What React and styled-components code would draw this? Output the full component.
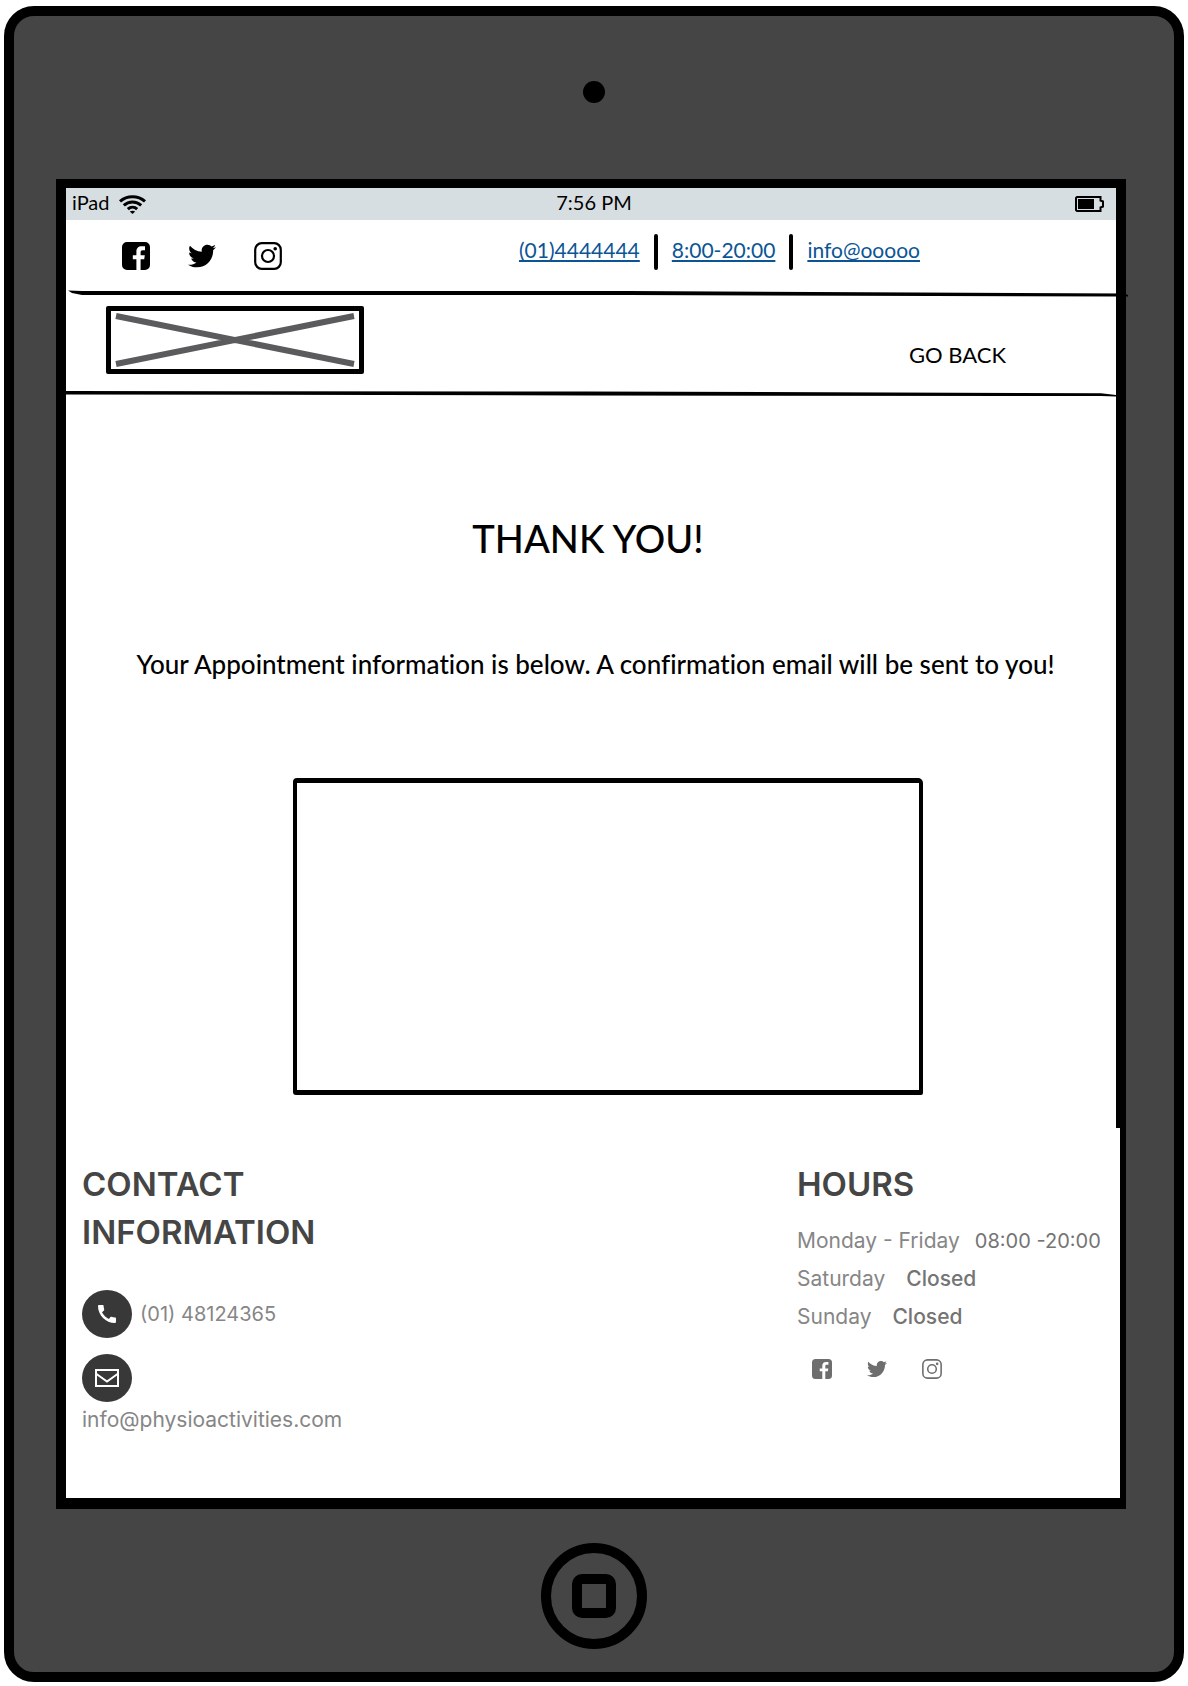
import React from "react";
import styled, { createGlobalStyle } from "styled-components";
import { FaTwitter } from "react-icons/fa";
import { MdCall } from "react-icons/md";

const GlobalStyle = createGlobalStyle`
  *, *::before, *::after { box-sizing: border-box; }
  body {
    margin: 0;
    background: #fff;
    color: #000;
    font-family: Lato, "Liberation Sans", sans-serif;
    font-variant-ligatures: no-common-ligatures;
  }
  h1, h2, p, ul, dl, dd { margin: 0; padding: 0; }
  ul { list-style: none; }
  svg { display: block; }
  a { color: inherit; text-decoration: none; }
`;

/* ---------- Tablet ---------- */

const Tablet = styled.div`
  margin: 6px 4px 4px;
  padding: 65px 48px 23px 42px;
  display: flex;
  flex-direction: column;
  background: #454545;
  border: 10px solid #000;
  border-radius: 30px;
`;

const Camera = styled.div`
  width: 22px;
  height: 22px;
  margin: 0 auto 76px;
  transform: translateX(3px);
  border-radius: 50%;
  background: #000;
`;

const Screen = styled.div`
  background: #fff;
  border: solid #000;
  border-width: 9px 10px 11px;
`;

const HomeButton = styled.button`
  width: 106px;
  height: 106px;
  margin: 34px auto 0;
  padding: 0;
  transform: translateX(3px);
  display: grid;
  place-items: center;
  background: none;
  border: 10px solid #000;
  border-radius: 50%;
`;

const HomeGlyph = styled.span`
  width: 44px;
  height: 44px;
  border: 10px solid #000;
  border-radius: 10px;
`;

/* ---------- Status bar ---------- */

const StatusBar = styled.div`
  height: 32px;
  padding-left: 6px;
  display: grid;
  grid-template-columns: 1fr auto 1fr;
  align-items: center;
  background: #d7dee1;
  font-size: 20px;
`;

const Carrier = styled.div`
  display: flex;
  align-items: center;
  gap: 10px;
`;

const StatusText = styled.span`
  padding-bottom: 4px;
  line-height: 28px;
`;

const BatterySlot = styled.div`
  justify-self: end;
  margin-right: 12px;
`;

/* ---------- Header ---------- */

const TopBar = styled.div`
  height: 70px;
  padding: 14px 196px 0 56px;
  display: flex;
  justify-content: space-between;
  align-items: flex-start;
`;

const SocialList = styled.ul`
  display: flex;
  align-items: center;
  gap: ${(p) => p.$gap}px;
  padding: ${(p) => p.$pad};
  color: ${(p) => p.$color};
`;

const SocialLink = styled.a`
  display: block;
`;

const ContactList = styled.ul`
  display: flex;
  align-items: flex-start;
  gap: 14px;
  font-size: 21px;
  line-height: 32px;
`;

const ContactLink = styled.a`
  color: #0b5596;
  text-decoration: underline;
  text-decoration-thickness: 2px;
  text-decoration-skip-ink: none;
  text-underline-offset: 2px;
`;

const Divider = styled.li`
  width: 4px;
  height: 36px;
  border-radius: 2px;
  background: #000;
`;

const RuleDrawing = styled.svg`
  width: ${(p) => (p.$bleed ? "calc(100% + 10px)" : "100%")};
  height: 7px;
  margin-left: ${(p) => (p.$bleed ? 2 : 0)}px;
`;

const NavBar = styled.nav`
  height: 93px;
  padding: 9px 110px 0 40px;
  display: flex;
  justify-content: space-between;
  align-items: flex-start;
`;

const LogoBox = styled.a`
  width: 258px;
  height: 68px;
  padding: 4px;
  border: 5px solid #000;
  border-radius: 2px;
`;

const BackLink = styled.a`
  padding-top: 34px;
  font-size: 22px;
  line-height: 30px;
`;

/* ---------- Main ---------- */

const Main = styled.main`
  padding: 118px 0 33px;
  display: flex;
  flex-direction: column;
  align-items: center;
`;

const Title = styled.h1`
  padding-right: 6px;
  font-size: 38px;
  font-weight: 500;
  line-height: 46px;
`;

const Message = styled.p`
  margin-top: 87px;
  padding-left: 9px;
  font-size: 26px;
  font-weight: 500;
  line-height: 32px;
`;

const Details = styled.section`
  width: 630px;
  max-width: 100%;
  min-height: 317px;
  margin: 98px 0 0 34px;
  border: 4px solid #000;
  border-width: 5px 4px;
  border-radius: 4px 5px 2px 3px;
`;

/* ---------- Footer ---------- */

const Footer = styled.footer`
  margin-right: -4px;
  padding: 32px 0 60px 16px;
  display: flex;
  justify-content: space-between;
  background: #fff;
  color: #868686;
  font-family: Inter, "Liberation Sans", sans-serif;
  font-size: 21px;
`;

const ContactColumn = styled.section`
  width: 270px;
`;

const HoursColumn = styled.section`
  width: 323px;
`;

const FooterTitle = styled.h2`
  color: #454545;
  font-size: 33px;
  font-weight: 600;
  line-height: 48px;
`;

const PhoneLink = styled.a`
  margin: 34px 0 16px;
  display: flex;
  align-items: center;
  gap: 8px;
  font-size: 20px;
`;

const EmailLink = styled.a`
  display: block;
  line-height: 36px;
`;

const Disc = styled.span`
  width: 50px;
  height: 48px;
  display: grid;
  place-items: center;
  border-radius: 50%;
  background: #383838;
  color: #fff;
`;

const HoursList = styled.dl`
  margin: 14px 0 23px;
`;

const HoursRow = styled.div`
  display: flex;
  gap: ${(p) => (p.$closed ? 21 : 15)}px;
  line-height: 38px;
`;

const Time = styled.dd`
  color: #747474;
  font-size: ${(p) => (p.$closed ? 21 : 20)}px;
  font-weight: ${(p) => (p.$closed ? 500 : 400)};
`;

/* ---------- Drawings ---------- */

const WifiIcon = () => (
  <svg width="27" height="19" viewBox="0 0 27 19" fill="none" stroke="#000" strokeWidth="3" aria-hidden="true">
    <path d="M1 6.4C8 .2 19 .2 26 6.4" />
    <path d="M4.8 10.4c5-4.6 12.4-4.6 17.4 0" />
    <path d="M8.8 14.2c2.8-2.6 6.6-2.6 9.4 0" />
    <path d="M10.8 16.6c1.6-1.3 3.8-1.3 5.4 0L13.5 19z" fill="#000" stroke="none" />
  </svg>
);

const BatteryIcon = () => (
  <svg width="29" height="16" viewBox="0 0 29 16" fill="none" stroke="#000" strokeWidth="2" aria-hidden="true">
    <path d="M2 1h23.500v3.500l2.500 1v5l-2.500 1V15H2l-1-1V2z" />
    <path d="M3 3h16v10H3z" fill="#000" stroke="none" />
  </svg>
);

const FacebookIcon = ({ size }) => (
  <svg width={size} height={size} viewBox="0 0 28 28" fill="currentColor" fillRule="evenodd" aria-hidden="true">
    <path d="M5 0H23a5 5 0 0 1 5 5V23a5 5 0 0 1-5 5H18.600V17.300H22.200L22.800 13.200H18.600V10.200C18.600 8.900 19.200 8.200 20.800 8.200H23V4.300H19.700C16.200 4.300 14.400 6.300 14.400 9.700V13.200H10.800V17.300H14.400V28H5a5 5 0 0 1-5-5V5a5 5 0 0 1 5-5Z" />
  </svg>
);

const InstagramIcon = ({ size }) => (
  <svg width={size} height={size} viewBox="0 0 28 28" fill="none" stroke="currentColor" strokeWidth="2.200" aria-hidden="true">
    <rect x="1.200" y="1.200" width="25.600" height="25.600" rx="6.500" />
    <circle cx="14" cy="14" r="6" />
    <circle cx="21.200" cy="6.800" r="1.800" fill="currentColor" stroke="none" />
  </svg>
);

const MailIcon = () => (
  <svg width="24" height="18" viewBox="0 0 24 18" fill="none" stroke="#fff" strokeWidth="2" aria-hidden="true">
    <rect x="1" y="1" width="22" height="16" />
    <path d="M1.500 5l10.500 7.500L22.500 5" />
  </svg>
);

const LogoCross = () => (
  <svg width="100%" height="100%" viewBox="0 0 240 50" preserveAspectRatio="none" overflow="visible" stroke="#5b5b5d" strokeWidth="6" aria-hidden="true">
    <path d="M1 1L239 49M1 49L239 1" />
  </svg>
);

const TopRule = () => (
  <RuleDrawing $bleed viewBox="0 0 1060 7" preserveAspectRatio="none" aria-hidden="true">
    <path d="M0 .5L14 1H560L1056 3.500 1060 5V6.500L1050 6.500 560 5H14L4 3Z" />
  </RuleDrawing>
);

const NavRule = () => (
  <RuleDrawing viewBox="0 0 1050 7" preserveAspectRatio="none" aria-hidden="true">
    <path d="M0 1L520 1.500 1035 3.200 1050 5V6.500L1035 6 520 5.500 0 4.500Z" />
  </RuleDrawing>
);

const Socials = ({ size, gap, pad, color }) => (
  <SocialList $gap={gap} $pad={pad} $color={color}>
    <li><SocialLink href="#facebook" aria-label="Facebook"><FacebookIcon size={size} /></SocialLink></li>
    <li><SocialLink href="#twitter" aria-label="Twitter"><FaTwitter size={size} /></SocialLink></li>
    <li><SocialLink href="#instagram" aria-label="Instagram"><InstagramIcon size={size} /></SocialLink></li>
  </SocialList>
);

const hours = [
  { day: "Monday - Friday", time: "08:00 -20:00", closed: false },
  { day: "Saturday", time: "Closed", closed: true },
  { day: "Sunday", time: "Closed", closed: true },
];

export default function App() {
  return (
    <>
      <GlobalStyle />
      <Tablet>
        <Camera />
        <Screen>
          <StatusBar>
            <Carrier><StatusText>iPad</StatusText><WifiIcon /></Carrier>
            <StatusText>7:56 PM</StatusText>
            <BatterySlot><BatteryIcon /></BatterySlot>
          </StatusBar>

          <header>
            <TopBar>
              <Socials size={28} gap={38} pad="8px 0 0" color="#000" />
              <ContactList>
                <li><ContactLink href="#phone">(01)4444444</ContactLink></li>
                <Divider aria-hidden="true" />
                <li><ContactLink href="#hours">8:00-20:00</ContactLink></li>
                <Divider aria-hidden="true" />
                <li><ContactLink href="#email">info@ooooo</ContactLink></li>
              </ContactList>
            </TopBar>
            <TopRule />
            <NavBar>
              <LogoBox href="#home" aria-label="Home"><LogoCross /></LogoBox>
              <BackLink href="#back">GO BACK</BackLink>
            </NavBar>
            <NavRule />
          </header>

          <Main>
            <Title>THANK YOU!</Title>
            <Message>
              Your Appointment information is below. A confirmation email will be sent to you!
            </Message>
            <Details aria-label="Appointment" />
          </Main>

          <Footer>
            <ContactColumn>
              <FooterTitle>CONTACT INFORMATION</FooterTitle>
              <PhoneLink href="#phone">
                <Disc><MdCall size={24} /></Disc>
                (01) 48124365
              </PhoneLink>
              <EmailLink href="#email">
                <Disc><MailIcon /></Disc>
                info@physioactivities.com
              </EmailLink>
            </ContactColumn>
            <HoursColumn id="hours">
              <FooterTitle>HOURS</FooterTitle>
              <HoursList>
                {hours.map(({ day, time, closed }) => (
                  <HoursRow key={day} $closed={closed}>
                    <dt>{day}</dt>
                    <Time $closed={closed}>{time}</Time>
                  </HoursRow>
                ))}
              </HoursList>
              <Socials size={20} gap={35} pad="0 0 0 15px" color="#6e6e6e" />
            </HoursColumn>
          </Footer>
        </Screen>
        <HomeButton type="button" aria-label="Home"><HomeGlyph /></HomeButton>
      </Tablet>
    </>
  );
}
